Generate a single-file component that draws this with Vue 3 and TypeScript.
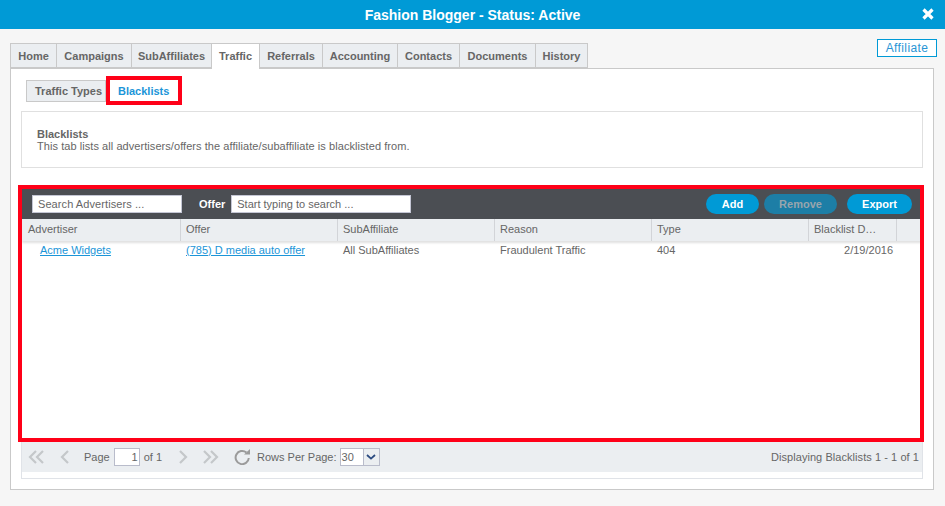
<script setup lang="ts">
const tabs: string[] = ['Home', 'Campaigns', 'SubAffiliates', 'Traffic', 'Referrals', 'Accounting', 'Contacts', 'Documents', 'History']
const tabWidths: number[] = [47, 75, 80, 48, 63, 75, 62, 76, 52]
const cols = [
  { label: 'Advertiser', w: 159 },
  { label: 'Offer', w: 157 },
  { label: 'SubAffiliate', w: 157 },
  { label: 'Reason', w: 157 },
  { label: 'Type', w: 157 },
  { label: 'Blacklist D…', w: 88 },
]
</script>

<template>
  <div class="page">
    <header class="titlebar">
      <span class="title">Fashion Blogger - Status: Active</span>
      <svg class="close" width="12" height="12" viewBox="0 0 12 12"><path d="M1.5 1.5 10.5 10.5M10.5 1.5 1.5 10.5" stroke="#fff" stroke-width="3.2" /></svg>
    </header>

    <div class="tabrow">
      <nav class="tabs">
        <a v-for="(t, i) in tabs" :key="t" class="tab" :class="{ active: t === 'Traffic' }" :style="{ width: tabWidths[i] + 'px' }">{{ t }}</a>
      </nav>
      <span class="badge">Affiliate</span>
    </div>

    <main class="panel">
      <div class="subtabs">
        <a class="subtab">Traffic Types</a>
        <a class="subtab current">Blacklists<i class="hl hl-small"></i></a>
      </div>

      <section class="info">
        <strong>Blacklists</strong>
        <p>This tab lists all advertisers/offers the affiliate/subaffiliate is blacklisted from.</p>
      </section>

      <section class="grid">
        <i class="hl hl-big"></i>
        <div class="toolbar">
          <div class="field adv">Search Advertisers ...</div>
          <label class="offer-label">Offer</label>
          <div class="field off">Start typing to search ...</div>
          <div class="spacer"></div>
          <button class="btn add">Add</button>
          <button class="btn remove">Remove</button>
          <button class="btn export">Export</button>
        </div>
        <div class="thead">
          <div v-for="c in cols" :key="c.label" class="th" :style="{ width: c.w + 'px' }">{{ c.label }}</div>
        </div>
        <div class="tbody">
          <div class="row">
            <div class="td" style="width: 159px"><a class="link first">Acme Widgets</a></div>
            <div class="td" style="width: 157px"><a class="link">(785) D media auto offer</a></div>
            <div class="td" style="width: 157px">All SubAffiliates</div>
            <div class="td" style="width: 157px">Fraudulent Traffic</div>
            <div class="td" style="width: 157px">404</div>
            <div class="td date" style="width: 88px">2/19/2016</div>
          </div>
        </div>
        <div class="pager">
          <svg class="ico first-ico" width="16" height="14" viewBox="0 0 16 14"><path d="M8 1 2 7l6 6M15 1 9 7l6 6" fill="none" stroke="#c4c7ca" stroke-width="2.2" /></svg>
          <svg class="ico prev-ico" width="10" height="14" viewBox="0 0 10 14"><path d="M8 1 2 7l6 6" fill="none" stroke="#c4c7ca" stroke-width="2.2" /></svg>
          <span class="ptext page-label">Page</span>
          <div class="pageinput">1</div>
          <span class="ptext of">of 1</span>
          <svg class="ico next-ico" width="10" height="14" viewBox="0 0 10 14"><path d="M2 1l6 6-6 6" fill="none" stroke="#c4c7ca" stroke-width="2.2" /></svg>
          <svg class="ico last-ico" width="16" height="14" viewBox="0 0 16 14"><path d="M1 1l6 6-6 6M8 1l6 6-6 6" fill="none" stroke="#c4c7ca" stroke-width="2.2" /></svg>
          <svg class="ico refresh" width="16" height="16" viewBox="0 0 16 16"><path d="M12.4 3.4A6.6 6.6 0 1 0 14.8 9" fill="none" stroke="#9b9b9b" stroke-width="2" /><path d="M10 5.4h6V0z" fill="#9b9b9b" /></svg>
          <span class="ptext rows">Rows Per Page:</span>
          <div class="select">
            <span class="val">30</span>
            <span class="arrow"><svg width="10" height="6" viewBox="0 0 10 6"><path d="M1 1l4 3.6L9 1" fill="none" stroke="#2b4a80" stroke-width="1.8" /></svg></span>
          </div>
          <div class="spacer"></div>
          <span class="ptext status">Displaying Blacklists 1 - 1 of 1</span>
        </div>
        <div class="gridfoot"></div>
      </section>
    </main>
  </div>
</template>

<style>
html, body { margin: 0; background: #f6f6f6; }
</style>

<style scoped>
.page {
  width: 945px;
  height: 506px;
  overflow: hidden;
  background: #f6f6f6;
  font-family: "Liberation Sans", Arial, sans-serif;
  font-size: 11px;
  color: #666;
  display: flex;
  flex-direction: column;
}
.titlebar {
  height: 29px;
  flex: none;
  background: #009ad6;
  color: #fff;
  display: flex;
  align-items: center;
  justify-content: center;
  position: relative;
}
.title { font-weight: 700; font-size: 14px; }
.close { position: absolute; right: 11px; top: 8px; }
.tabrow {
  display: flex;
  justify-content: space-between;
  align-items: flex-start;
  height: 40px;
  flex: none;
  padding: 0 8px 0 10px;
  position: relative;
  z-index: 1;
}
.tabs { display: flex; margin-top: 14px; height: 26px; }
.tab {
  box-sizing: border-box;
  height: 25px;
  line-height: 24px;
  text-align: center;
  font-weight: 700;
  background: #ebeef1;
  color: #666;
  border: 1px solid #c9c9c9;
  border-left-width: 0;
}
.tab:first-child { border-left-width: 1px; }
.tab.active {
  height: 26px;
  background: #fff;
  border-bottom: 0;
}
.badge {
  box-sizing: border-box;
  margin-top: 10px;
  width: 60px;
  height: 18px;
  line-height: 16px;
  text-align: center;
  background: #fff;
  border: 1px solid #009ad6;
  color: #2a95d5;
  font-size: 12px;
  letter-spacing: 0.4px;
}
.panel {
  box-sizing: border-box;
  width: 924px;
  height: 422px;
  flex: none;
  margin: -1px 0 0 10px;
  background: #fff;
  border: 1px solid #c9c9c9;
  padding: 11px 10px 0;
}
.subtabs { display: flex; height: 22px; margin-left: 5px; }
.subtab {
  box-sizing: border-box;
  height: 22px;
  width: 80px;
  line-height: 21px;
  padding-left: 8px;
  font-weight: 700;
  background: #ebeef1;
  border: 1px solid #c9c9c9;
  position: relative;
}
.subtab.current {
  width: 76px;
  padding-left: 12px;
  background: #fff;
  border: 0;
  color: #1b95d8;
  line-height: 22px;
}
.hl {
  position: absolute;
  box-sizing: border-box;
  border: 4px solid #ff0018;
  pointer-events: none;
}
.hl-small { left: 0; top: -4px; width: 76px; height: 29px; }
.hl-big { left: -4px; top: -4px; width: 906px; height: 257px; z-index: 2; }
.info {
  box-sizing: border-box;
  height: 57px;
  margin-top: 9px;
  border: 1px solid #e0e0e0;
  padding: 16px 15px 0;
  line-height: 12px;
  letter-spacing: 0.06px;
}
.info strong { display: block; font-weight: 700; letter-spacing: 0; }
.info p { margin: 0; }
.grid {
  box-sizing: border-box;
  height: 291px;
  margin-top: 20px;
  border: 1px solid #e0e3e8;
  position: relative;
  display: flex;
  flex-direction: column;
}
.toolbar {
  height: 30px;
  flex: none;
  background: #4b4e53;
  display: flex;
  align-items: center;
  padding: 0 10px;
}
.field {
  box-sizing: border-box;
  height: 18px;
  line-height: 17px;
  background: #fff;
  border: 1px solid #c4c6d4;
  padding-left: 5px;
  color: #666;
}
.adv { width: 150px; letter-spacing: 0.08px; }
.off { width: 180px; }
.offer-label { color: #fff; font-weight: 700; margin: 0 6px 0 17px; }
.spacer { flex: 1; }
.btn {
  height: 20px;
  padding: 0;
  border: 0;
  border-radius: 10px;
  background: #009ad6;
  color: #fff;
  font: 700 11px "Liberation Sans", Arial, sans-serif;
}
.add { width: 53px; }
.remove { width: 73px; margin-left: 5px; background: #1d7ea6; color: #98a5ad; }
.export { width: 65px; margin-left: 10px; }
.thead {
  height: 22px;
  flex: none;
  background: #ebeef1;
  display: flex;
  box-shadow: 0 2px 2px rgba(0, 0, 0, 0.12);
  position: relative;
}
.th {
  box-sizing: border-box;
  line-height: 21px;
  padding-left: 5px;
  border-right: 1px solid #d2d4d8;
}
.th:first-child { padding-left: 6px; }
.tbody { height: 200px; flex: none; background: #fff; }
.row { display: flex; height: 20px; line-height: 19px; }
.td { box-sizing: border-box; padding-left: 5px; }
.date { text-align: right; padding-right: 4px; }
.link { color: #1b95d8; text-decoration: underline; }
.first { margin-left: 13px; }
.pager {
  height: 31px;
  flex: none;
  background: #ebeef1;
  display: flex;
  align-items: center;
  padding: 0 3px 0 0;
}
.ico { flex: none; }
.first-ico { margin-left: 6px; }
.prev-ico { margin-left: 16px; }
.page-label { margin-left: 14px; }
.pageinput {
  box-sizing: border-box;
  width: 26px;
  height: 18px;
  margin: 0 4px 0 4px;
  padding-right: 1px;
  text-align: right;
  line-height: 17px;
  background: #fff;
  border: 1px solid #b9bccb;
}
.next-ico { margin-left: 16px; }
.last-ico { margin-left: 15px; }
.refresh { margin-left: 15px; }
.rows { margin-left: 7px; }
.select {
  box-sizing: border-box;
  display: flex;
  width: 40px;
  height: 18px;
  margin-left: 3px;
  background: #fff;
  border: 1px solid #b9bccb;
  line-height: 16px;
}
.val { width: 21px; padding-left: 1px; border-right: 1px solid #b9bccb; }
.arrow { flex: 1; display: flex; align-items: center; justify-content: center; background: #ebeef1; }
.status { letter-spacing: 0.06px; }
.gridfoot { flex: 1; background: #fff; }
</style>
